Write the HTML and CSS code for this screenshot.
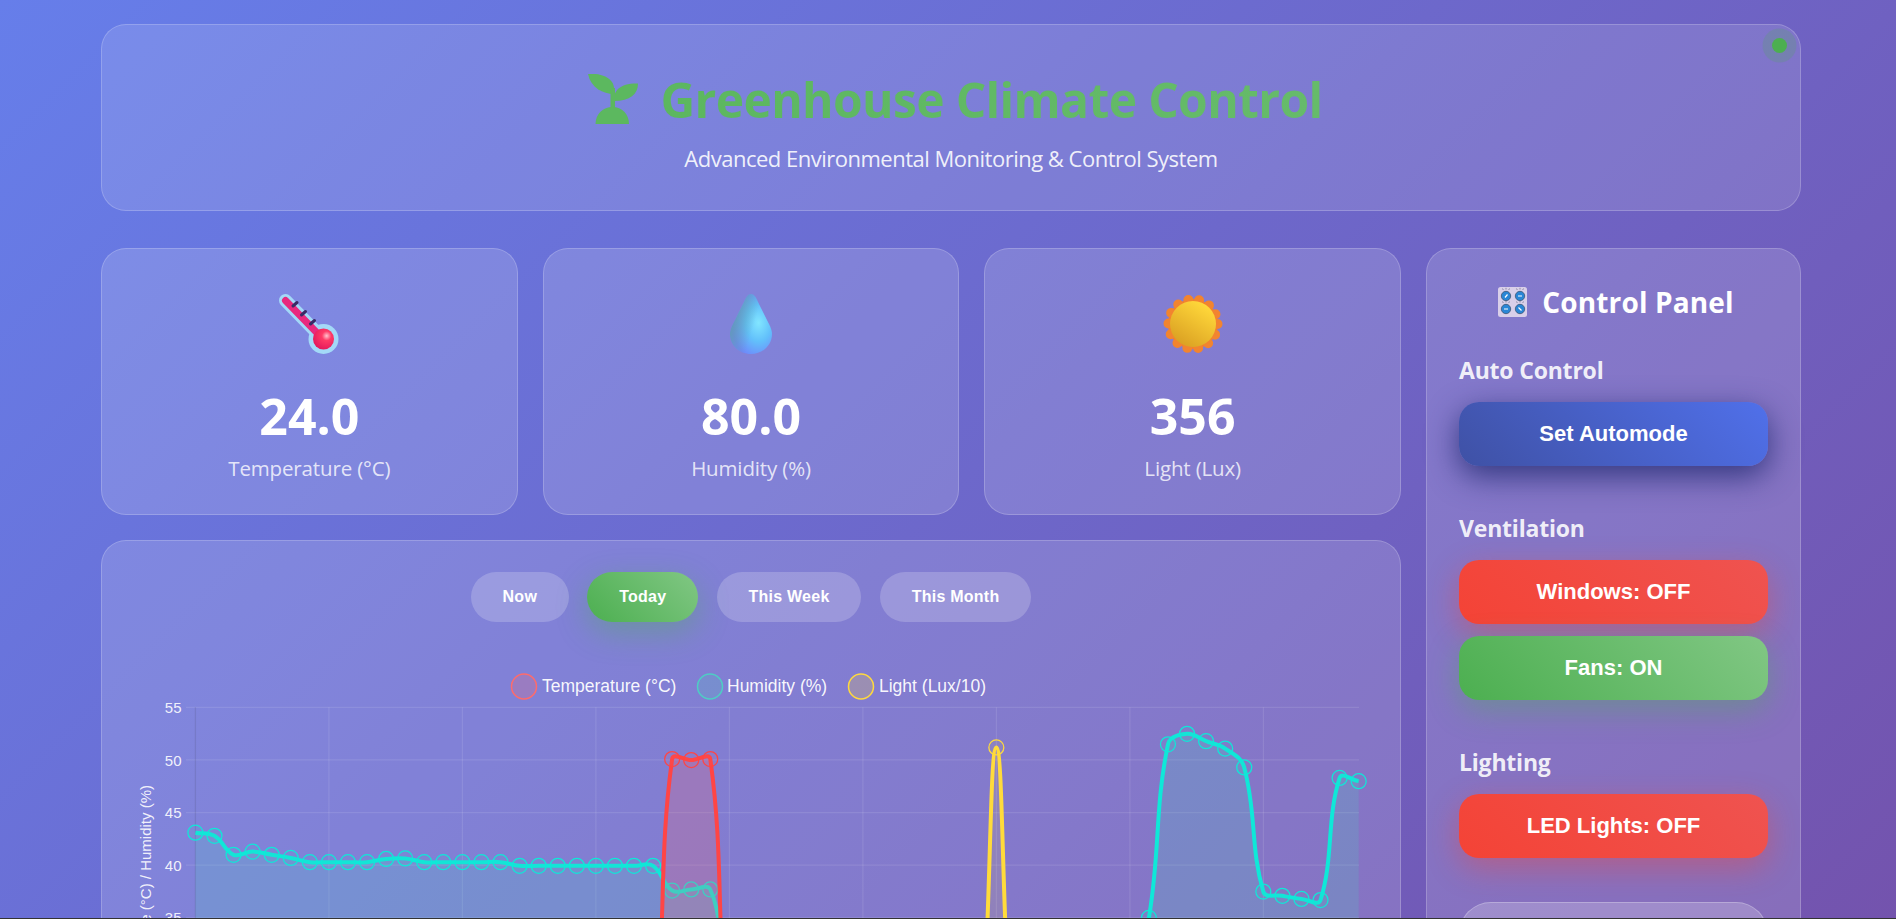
FILE: index.html
```html
<!DOCTYPE html>
<html lang="en">

<head>
    <meta charset="UTF-8">
    <title>Greenhouse Climate Control</title>
    <link rel="stylesheet" href="styles.css">
</head>

<body>
    <div class="page">
        <header class="header">
            <span class="status-dot"></span>
            <h1 class="title">
                <svg class="seedling" viewBox="0 0 50 50">
                    <path d="M0 0C10-1 20 2 24 8 26 11 26.500 15 26 20 15 20 3 14 0 0Z" />
                    <path d="M50 9.500C50 20 42 27 26 27 25 17 32 9 50 9.500Z" />
                    <rect x="22.500" y="14" width="4.500" height="22" />
                    <path d="M7.500 50C7.500 40 15 33 24.500 33 34 33 41 40 41 50Z" />
                </svg>
                <span class="title-text">Greenhouse Climate Control</span>
            </h1>
            <p class="subtitle">Advanced Environmental Monitoring &amp; Control System</p>
        </header>

        <div class="main">
            <div class="left">
                <div class="stats">
                    <div class="card stat">
                        <svg class="stat-icon" width="60" height="60" viewBox="0 0 60 60">
                            <defs>
                                <radialGradient id="bulb" cx=".65" cy=".35" r=".75">
                                    <stop offset="0" stop-color="#ffc4cf" />
                                    <stop offset=".3" stop-color="#ff3a66" />
                                    <stop offset="1" stop-color="#e0145a" />
                                </radialGradient>
                            </defs>
                            <path d="M6.500 6.500L44 45" stroke="#a3d9f7" stroke-width="13" stroke-linecap="round" />
                            <circle cx="44.500" cy="45" r="15" fill="#a3d9f7" />
                            <path d="M6.500 6.500L42 43" stroke="#e8297e" stroke-width="7" stroke-linecap="round" />
                            <circle cx="44.500" cy="45" r="10.500" fill="url(#bulb)" />
                            <path d="M14 12L18 8.500M22.500 21L26.500 17.500M31.500 30L35.500 26.500" stroke="#3a2a66" stroke-width="3" stroke-linecap="round" />
                        </svg>
                        <div class="stat-value">24.0</div>
                        <div class="stat-label">Temperature (°C)</div>
                    </div>
                    <div class="card stat">
                        <svg class="stat-icon" width="42" height="60" viewBox="0 0 42 60">
                            <defs>
                                <radialGradient id="drop" cx=".68" cy=".48" r=".62">
                                    <stop offset="0" stop-color="#82e6ff" />
                                    <stop offset=".5" stop-color="#62c0fb" />
                                    <stop offset="1" stop-color="#6f86fb" />
                                </radialGradient>
                                <linearGradient id="dropEdge" x1="0" y1=".2" x2=".6" y2=".45">
                                    <stop offset="0" stop-color="#5f9fa8" />
                                    <stop offset="1" stop-color="#5f9fa8" stop-opacity="0" />
                                </linearGradient>
                            </defs>
                            <path id="dropShape" d="M21 0C24 0 26 3 28 8L39 30C41 34 42 37 42 40 42 51 33 60 21 60 9 60 0 51 0 40 0 37 1 34 3 30L14 8C16 3 18 0 21 0Z" fill="url(#drop)" />
                            <path d="M21 0C24 0 26 3 28 8L39 30C41 34 42 37 42 40 42 51 33 60 21 60 9 60 0 51 0 40 0 37 1 34 3 30L14 8C16 3 18 0 21 0Z" fill="url(#dropEdge)" />
                        </svg>
                        <div class="stat-value">80.0</div>
                        <div class="stat-label">Humidity (%)</div>
                    </div>
                    <div class="card stat">
                        <svg class="stat-icon" width="60" height="60" viewBox="0 0 60 60">
                            <defs>
                                <linearGradient id="sun" x1=".8" y1=".1" x2=".25" y2=".95">
                                    <stop offset="0" stop-color="#ffd83a" />
                                    <stop offset="1" stop-color="#dba123" />
                                </linearGradient>
                            </defs>
                            <circle cx="30" cy="30" r="25" fill="#ef802f" />
                            <circle cx="30" cy="30" r="24.500" fill="none" stroke="#f2842f" stroke-width="10" stroke-linecap="round" stroke-dasharray="0 10.996" />
                            <circle cx="30" cy="30" r="23" fill="url(#sun)" />
                        </svg>
                        <div class="stat-value">356</div>
                        <div class="stat-label">Light (Lux)</div>
                    </div>
                </div>

                <div class="card chart-card">
                    <div class="ranges">
                        <button class="range">Now</button>
                        <button class="range range-active">Today</button>
                        <button class="range">This Week</button>
                        <button class="range">This Month</button>
                    </div>
                    <svg class="chart" id="chart" width="1297" height="500" viewBox="102 650 1297 500">
                        <g id="grid"></g>
                        <g class="legend">
                            <ellipse cx="524" cy="686.500" rx="12.500" ry="12.500" fill="rgba(255,107,107,.2)" stroke="#ff6b6b" stroke-width="1.500" />
                            <text x="542" y="692">Temperature (°C)</text>
                            <ellipse cx="710" cy="686.500" rx="12.500" ry="12.500" fill="rgba(78,205,196,.2)" stroke="#4ecdc4" stroke-width="1.500" />
                            <text x="727" y="692">Humidity (%)</text>
                            <ellipse cx="861" cy="686.500" rx="12.500" ry="12.500" fill="rgba(255,217,61,.2)" stroke="#ffd93d" stroke-width="1.500" />
                            <text x="879" y="692">Light (Lux/10)</text>
                        </g>
                        <g class="ticks">
                            <text x="181.500" y="712.500">55</text>
                            <text x="181.500" y="765.500">50</text>
                            <text x="181.500" y="818">45</text>
                            <text x="181.500" y="870.500">40</text>
                            <text x="181.500" y="923">35</text>
                        </g>
                        <text class="axis-title" transform="translate(151 785) rotate(-90)">Temperature (°C) / Humidity (%)</text>
                        <g id="series"></g>
                    </svg>
                </div>
            </div>

            <aside class="card panel">
                <h2 class="panel-title">
                    <svg class="panel-icon" width="29" height="30" viewBox="0 0 29 30">
                        <rect width="29" height="30" rx="2.500" fill="#d9cfe9" />
                        <g stroke="#7c7c90" stroke-width=".8">
                            <path d="M4.500 1.500L5.300 3M8 .8V2.500M11.500 1.500L10.700 3M18.500 1.500L19.300 3M22 .8V2.500M25.500 1.500L24.700 3" />
                            <path d="M4.500 14.500L5.300 16M8 13.800V15.500M11.500 14.500L10.700 16M18.500 14.500L19.300 16M22 13.800V15.500M25.500 14.500L24.700 16" />
                        </g>
                        <g fill="#2a86d6" stroke="#3d5674" stroke-width=".8">
                            <circle cx="8" cy="9" r="4.700" />
                            <circle cx="22" cy="9" r="4.700" />
                            <circle cx="8" cy="22" r="4.700" />
                            <circle cx="22" cy="22" r="4.700" />
                        </g>
                        <path d="M7 10.500L9.500 7.500M20 9H24M6 22H10M20.500 20.500L23.500 23.500" stroke="#fff" stroke-width="1.200" />
                    </svg>
                    Control Panel
                </h2>

                <h3 class="group-title group-auto">Auto Control</h3>
                <button class="btn btn-auto">Set Automode</button>

                <h3 class="group-title">Ventilation</h3>
                <button class="btn btn-off">Windows: OFF</button>
                <button class="btn btn-on">Fans: ON</button>

                <h3 class="group-title">Lighting</h3>
                <button class="btn btn-off">LED Lights: OFF</button>

                <button class="btn btn-plain"></button>
            </aside>
        </div>
    </div>
    <script src="chart.js"></script>
</body>

</html>
```
FILE: styles.css
```css
* {
    box-sizing: border-box;
}

html,
body {
    margin: 0;
    height: 100%;
    overflow: hidden;
}

body {
    border-bottom: 1px solid #333;
    font-family: "Open Sans", "Noto Sans", sans-serif;
    color: #fff;
}

.page {
    height: 1450px;
    padding: 24px 95px 0 101px;
    background: linear-gradient(135deg, #667eea 0%, #764ba2 100%);
}

.header {
    position: relative;
    height: 187px;
    margin-bottom: 37px;
    padding-top: 41px;
    text-align: center;
    background: rgba(255, 255, 255, .12);
    border: 1px solid rgba(255, 255, 255, .2);
    border-radius: 25px;
}

.status-dot {
    position: absolute;
    top: 13px;
    right: 13.500px;
    width: 15px;
    height: 15px;
    border-radius: 50%;
    background: #4caf50;
    box-shadow: 0 0 0 9.500px rgba(76, 175, 80, .2);
}

.title {
    display: flex;
    align-items: center;
    justify-content: center;
    gap: 23px;
    margin: 0 0 0 8px;
    height: 66px;
    font-size: 48px;
    font-weight: 700;
    letter-spacing: -.65px;
}

.seedling {
    width: 50px;
    height: 50px;
    fill: #5cb85f;
}

.title-text {
    background: linear-gradient(90deg, #5cb75f, #66bb6a);
    -webkit-background-clip: text;
    background-clip: text;
    color: transparent;
}

.subtitle {
    margin: 11px 0 0;
    font-size: 22px;
    line-height: 30px;
    letter-spacing: -.5px;
    color: rgba(255, 255, 255, .9);
}

.main {
    display: grid;
    grid-template-columns: 1fr 375px;
    gap: 25px;
    align-items: start;
}

.left {
    min-width: 0;
}

.stats {
    display: grid;
    grid-template-columns: repeat(3, 1fr);
    gap: 25px;
    margin-bottom: 25px;
}

.card {
    background: rgba(255, 255, 255, .15);
    border: 1px solid rgba(255, 255, 255, .2);
    border-radius: 25px;
}

.stat {
    display: flex;
    flex-direction: column;
    align-items: center;
    height: 267px;
    padding-top: 45px;
}

.stat-icon {
    display: block;
}

.stat-value {
    margin-top: 28px;
    font-size: 50px;
    line-height: 68px;
    font-weight: 700;
}

.stat-label {
    margin-top: 5px;
    font-size: 20.500px;
    line-height: 26px;
    letter-spacing: -.15px;
    color: rgba(255, 255, 255, .8);
}

.chart-card {
    height: 900px;
    padding-top: 31px;
}

.ranges {
    display: flex;
    justify-content: center;
    gap: 18.500px;
    margin-bottom: 28px;
}

.range {
    height: 50px;
    padding: 0 31.800px;
    border: 0;
    border-radius: 25px;
    font-family: "Liberation Sans", Arial, sans-serif;
    font-size: 16px;
    font-weight: 700;
    letter-spacing: .25px;
    color: #fff;
    background: rgba(255, 255, 255, .2);
}

.range-active {
    background: linear-gradient(45deg, #4caf50, #81c784);
    box-shadow: 0 10px 31px rgba(76, 175, 80, .4);
}

.chart {
    display: block;
    font-family: "Liberation Sans", Arial, sans-serif;
}

.legend text {
    font-size: 17.500px;
    fill: rgba(255, 255, 255, .95);
}

.ticks text {
    font-size: 15px;
    text-anchor: end;
    fill: rgba(255, 255, 255, .9);
}

.axis-title {
    font-size: 15px;
    text-anchor: end;
    fill: rgba(255, 255, 255, .9);
}

.panel {
    height: 900px;
    padding: 0 32px;
}

.panel-title {
    display: flex;
    align-items: center;
    justify-content: center;
    gap: 15px;
    margin: 30px 0 0 5px;
    height: 46px;
    font-size: 28px;
    font-weight: 700;
    letter-spacing: .15px;
}

.panel-icon {
    flex: none;
}

.group-title {
    margin: 47px 0 17px;
    height: 30px;
    line-height: 30px;
    font-size: 23px;
    font-weight: 700;
    letter-spacing: -.2px;
    color: rgba(255, 255, 255, .9);
}

.group-auto {
    margin-top: 30px;
}

.btn {
    display: block;
    width: 100%;
    height: 64px;
    margin-bottom: 12px;
    border: 0;
    border-radius: 20px;
    font-family: "Liberation Sans", Arial, sans-serif;
    font-size: 22px;
    font-weight: 700;
    color: #fff;
}

.btn-auto {
    background: linear-gradient(45deg, #3f51a5, #5070ea);
    box-shadow: 0 10px 31px rgba(30, 40, 110, .8);
}

.btn-off {
    background: linear-gradient(45deg, #f44336, #ef5350);
    box-shadow: 0 10px 31px rgba(244, 67, 54, .4);
}

.btn-on {
    background: linear-gradient(45deg, #4caf50, #81c784);
    box-shadow: 0 10px 31px rgba(76, 175, 80, .4);
}

.btn-plain {
    margin-top: 44px;
    border: 1px solid rgba(255, 255, 255, .25);
    border-radius: 32px;
    background: rgba(255, 255, 255, .2);
}
```
FILE: chart.js
```js
// today's readings, 62 samples
var temp = [], hum = [], light = [];
for (var i = 0; i < 62; i++) {
    temp.push(24);
    hum.push(30);
    light.push(20);
}
temp[25] = 50.1; temp[26] = 50; temp[27] = 50.1;
light[42] = 51.2;

var humKnown = [43.1, 42.8, 41, 41.3, 41, 40.7, 40.3, 40.3, 40.3, 40.3, 40.6, 40.65, 40.3, 40.3, 40.3, 40.3, 40.3,
    39.95, 39.95, 39.95, 39.95, 39.95, 39.95, 39.95, 39.95, 37.6, 37.7, 37.7];
for (var i = 0; i < humKnown.length; i++) hum[i] = humKnown[i];
var humEnd = [35, 51.5, 52.5, 51.8, 51.1, 49.3, 37.5, 37.1, 36.8, 36.7, 48.3, 48];
for (var i = 0; i < humEnd.length; i++) hum[50 + i] = humEnd[i];

var NS = 'http://www.w3.org/2000/svg';
var X0 = 195.4, DX = 19.07, TENSION = 0.4;
var BOTTOM = 1150;

function px(i) { return X0 + i * DX; }
function py(v) { return 865.3 - (v - 40) * 10.52; }

function el(parent, name, attrs) {
    var e = document.createElementNS(NS, name);
    for (var k in attrs) e.setAttribute(k, attrs[k]);
    parent.appendChild(e);
    return e;
}

// same spline as chart.js
function linePath(values) {
    var pts = values.map(function (v, i) { return [px(i), py(v)]; });
    var d = 'M' + pts[0][0] + ' ' + pts[0][1];
    function ctrl(i) {
        var prev = pts[Math.max(i - 1, 0)], cur = pts[i], next = pts[Math.min(i + 1, pts.length - 1)];
        var d01 = Math.hypot(cur[0] - prev[0], cur[1] - prev[1]);
        var d12 = Math.hypot(next[0] - cur[0], next[1] - cur[1]);
        var total = d01 + d12 || 1;
        var fa = TENSION * d01 / total, fb = TENSION * d12 / total;
        return {
            before: [cur[0] - fa * (next[0] - prev[0]), cur[1] - fa * (next[1] - prev[1])],
            after: [cur[0] + fb * (next[0] - prev[0]), cur[1] + fb * (next[1] - prev[1])]
        };
    }
    for (var i = 1; i < pts.length; i++) {
        var a = ctrl(i - 1).after, b = ctrl(i).before;
        d += 'C' + a[0] + ' ' + a[1] + ' ' + b[0] + ' ' + b[1] + ' ' + pts[i][0] + ' ' + pts[i][1];
    }
    return d;
}

function drawGrid() {
    var grid = document.getElementById('grid');
    for (var k = 0; k < 6; k++) {
        var y = 707.3 + k * 52.6;
        el(grid, 'line', { x1: 186, x2: 1359, y1: y, y2: y, stroke: 'rgba(255,255,255,.1)', 'stroke-width': 1.25 });
    }
    for (var k = 0; k < 9; k++) {
        var x = X0 + k * 133.5;
        el(grid, 'line', {
            x1: x, x2: x, y1: 707.3, y2: BOTTOM,
            stroke: k == 0 ? 'rgba(60,60,90,.15)' : 'rgba(255,255,255,.1)', 'stroke-width': 1.25
        });
    }
}

function drawSeries(values, color, fill, pointFill) {
    var g = document.getElementById('series');
    var d = linePath(values);
    el(g, 'path', { d: d + 'L' + px(61) + ' ' + BOTTOM + 'L' + X0 + ' ' + BOTTOM + 'Z', fill: fill });
    el(g, 'path', { d: d, fill: 'none', stroke: color, 'stroke-width': 4 });
    values.forEach(function (v, i) {
        el(g, 'circle', { cx: px(i), cy: py(v), r: 7.5, fill: pointFill, stroke: color, 'stroke-width': 1.25 });
    });
}

drawGrid();
drawSeries(light, '#ffdb3b', 'rgba(255,217,61,.1)', 'rgba(255,217,61,.08)');
drawSeries(hum, '#0fe8d8', 'rgba(78,205,196,.2)', 'rgba(78,205,196,.08)');
drawSeries(temp, '#ff4545', 'rgba(255,107,107,.2)', 'rgba(255,107,107,.08)');
```
